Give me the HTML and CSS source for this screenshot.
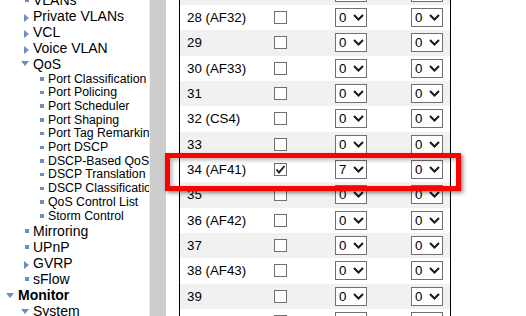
FILE: index.html
```html
<!DOCTYPE html>
<html lang="en">
<head>
    <meta charset="UTF-8">
    <title>QoS DSCP-Based QoS</title>
    <link rel="stylesheet" href="styles.css">
</head>
<body>
<div class="page">
    <div class="menu">
        <ul class="tree">
            <li class="l1"><span class="ic"><i class="dot"></i></span>VLANs</li>
            <li class="l1"><span class="ic"><i class="right"></i></span>Private VLANs</li>
            <li class="l1"><span class="ic"><i class="right"></i></span>VCL</li>
            <li class="l1"><span class="ic"><i class="right"></i></span>Voice VLAN</li>
            <li class="l1"><span class="ic"><i class="down"></i></span>QoS</li>
            <li class="sub">
                <ul>
                    <li class="l2"><span class="ic"><i class="dot"></i></span>Port Classification</li>
                    <li class="l2"><span class="ic"><i class="dot"></i></span>Port Policing</li>
                    <li class="l2"><span class="ic"><i class="dot"></i></span>Port Scheduler</li>
                    <li class="l2"><span class="ic"><i class="dot"></i></span>Port Shaping</li>
                    <li class="l2"><span class="ic"><i class="dot"></i></span>Port Tag Remarking</li>
                    <li class="l2"><span class="ic"><i class="dot"></i></span>Port DSCP</li>
                    <li class="l2"><span class="ic"><i class="dot"></i></span>DSCP-Based QoS</li>
                    <li class="l2"><span class="ic"><i class="dot"></i></span>DSCP Translation</li>
                    <li class="l2"><span class="ic"><i class="dot"></i></span>DSCP Classification</li>
                    <li class="l2"><span class="ic"><i class="dot"></i></span>QoS Control List</li>
                    <li class="l2"><span class="ic"><i class="dot"></i></span>Storm Control</li>
                </ul>
            </li>
            <li class="l1"><span class="ic"><i class="dot"></i></span>Mirroring</li>
            <li class="l1"><span class="ic"><i class="dot"></i></span>UPnP</li>
            <li class="l1"><span class="ic"><i class="right"></i></span>GVRP</li>
            <li class="l1"><span class="ic"><i class="dot"></i></span>sFlow</li>
            <li class="l0"><span class="ic"><i class="down"></i></span>Monitor</li>
            <li class="l1"><span class="ic"><i class="down"></i></span>System</li>
        </ul>
    </div>
    <div class="divider"></div>
    <div class="main">
        <div class="grid" id="grid"></div>
        <div class="mark"></div>
    </div>
</div>
<script>
    var oGrid = document.getElementById('grid');
    var names = {28: 'AF32', 30: 'AF33', 32: 'CS4', 34: 'AF41', 36: 'AF42', 38: 'AF43'};
    var chevron = '<svg width="11" height="7" viewBox="0 0 11 7"><polyline points="1,1 5.5,5.5 10,1" fill="none" stroke="#1a1a1a" stroke-width="2"/></svg>';
    var tick = '<svg width="11" height="11" viewBox="0 0 11 11"><polyline points="1.5,5.5 4,8.5 9.5,2" fill="none" stroke="#1a1a1a" stroke-width="1.9"/></svg>';
    var html = '';
    for (var i = 27; i <= 40; i++) {
        var label = names[i] ? i + ' (' + names[i] + ')' : i;
        var on = i == 34;
        html += '<div class="row' + (i % 2 ? ' odd' : '') + '">'
            + '<div class="num">' + label + '</div>'
            + '<div class="chk"><span class="box">' + (on ? tick : '') + '</span></div>'
            + '<div class="s1"><span class="sel">' + (on ? 7 : 0) + chevron + '</span></div>'
            + '<div class="s2"><span class="sel">0' + chevron + '</span></div>'
            + '</div>';
    }
    oGrid.innerHTML = html;
</script>
</body>
</html>
```

FILE: styles.css
```css
*{
    padding: 0;
    margin: 0;
}
html, body{
    height: 316px;
    overflow: hidden;
    background: #fff;
}
body{
    font-family: "Liberation Sans", Arial, sans-serif;
    color: #000;
}
.page{
    display: flex;
    height: 316px;
}
.menu{
    width: 149px;
    flex: none;
    overflow: hidden;
    white-space: nowrap;
    border-right: 1px solid #f0f0f0;
}
.tree{
    list-style: none;
    margin-top: -8.5px;
}
.tree ul{
    list-style: none;
    padding-top: 1px;
}
.l0, .l1{
    font-size: 14px;
    line-height: 16px;
}
.l0{
    padding-left: 6px;
    font-weight: bold;
}
.l1{
    padding-left: 21px;
}
.l2{
    padding-left: 36px;
    font-size: 12.3px;
    line-height: 13.7px;
}
.ic{
    display: inline-block;
    width: 12px;
}
.ic i{
    display: inline-block;
    width: 0;
    height: 0;
}
.right{
    margin-left: 3px;
    border-left: 5px solid #6a8ec8;
    border-top: 4px solid transparent;
    border-bottom: 4px solid transparent;
    vertical-align: -1px;
}
.down{
    border-top: 5px solid #6a8ec8;
    border-left: 4.5px solid transparent;
    border-right: 4.5px solid transparent;
    vertical-align: 2.5px;
}
.ic .dot{
    width: 4px;
    height: 4px;
    margin-left: 4px;
    background: #6a8ec8;
    vertical-align: 3px;
}
.l2 .ic .dot{
    width: 3.5px;
    height: 3.5px;
    vertical-align: 2px;
}
.divider{
    width: 16px;
    flex: none;
    background: #cdcdcd;
}
.main{
    position: relative;
    flex: 1;
}
.grid{
    width: 270px;
    margin: -20.33px 0 0 13px;
    border-left: 1px solid #000;
    border-right: 1px solid #000;
    font-size: 13.3px;
}
.row{
    display: flex;
    align-items: center;
    height: 25.33px;
}
.row.odd{
    background: #f1f1f1;
}
.num{
    width: 94px;
    padding-left: 7px;
    box-sizing: border-box;
}
.chk{
    width: 61px;
}
.s1{
    width: 76px;
}
.box{
    display: flex;
    align-items: center;
    justify-content: center;
    width: 13px;
    height: 13px;
    box-sizing: border-box;
    border: 1px solid #707070;
    background: #fff;
}
.sel{
    display: flex;
    align-items: center;
    width: 32px;
    height: 19px;
    box-sizing: border-box;
    border: 1px solid #707070;
    background: #fff;
    padding-left: 3px;
}
.sel svg{
    margin-left: 7px;
}
.mark{
    position: absolute;
    left: -1px;
    top: 153px;
    width: 296px;
    height: 38px;
    box-sizing: border-box;
    border: 5px solid #ff0000;
    box-shadow: 2px 2px 4px rgba(0,0,0,0.45), inset 2px 2px 4px rgba(0,0,0,0.3);
}
```
